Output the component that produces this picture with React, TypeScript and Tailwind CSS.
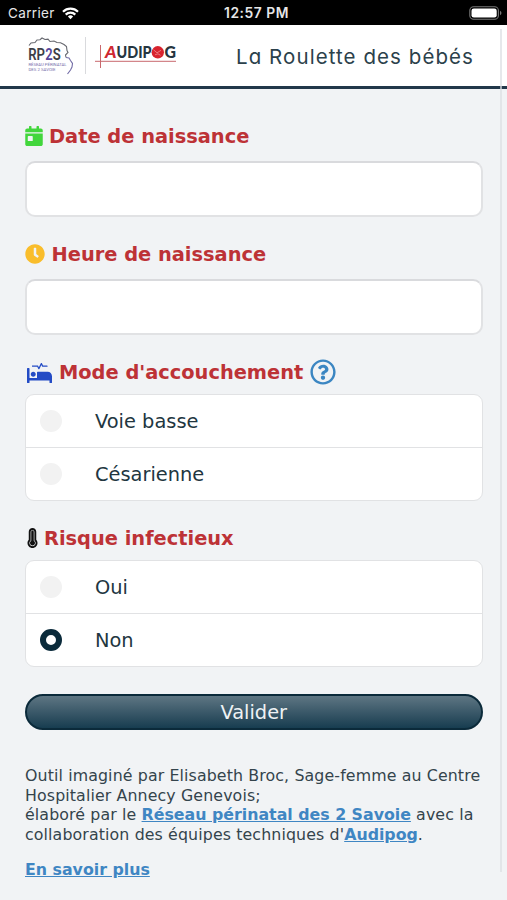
import type { ReactNode } from "react";
import {
  FaCalendarDay,
  FaClock,
  FaProcedures,
  FaRegQuestionCircle,
  FaThermometerFull,
} from "react-icons/fa";

function StatusBar() {
  return (
    <div className="grid h-[25px] grid-cols-3 items-center bg-black pl-2 pr-[5px] pt-px font-[Inter,sans-serif] text-[13.5px] text-[#e6e6e6]">
      <div className="flex items-center gap-[7px]">
        <span className="tracking-[0.35px]">Carrier</span>
        <svg width="17" height="13" viewBox="0 0 17 13" fill="none" stroke="#fff" strokeWidth="2.2">
          <path d="M1 4.800a10.600 10.600 0 0 1 15 0" />
          <path d="M3.700 7.600a6.800 6.800 0 0 1 9.600 0" />
          <path d="M8.500 12.200 5.900 9.500a3.700 3.700 0 0 1 5.200 0z" fill="#fff" stroke="none" />
        </svg>
      </div>
      <div className="whitespace-nowrap pl-[3px] text-center text-[13.8px] font-semibold tracking-[0.55px]">12:57 PM</div>
      <div className="flex justify-end">
        <svg width="33" height="14" viewBox="0 0 33 14">
          <rect x="0.8" y="0.8" width="28.6" height="12.4" rx="3.8" fill="none" stroke="#777" strokeWidth="1.1" />
          <rect x="2.5" y="2.4" width="25.2" height="9.2" rx="2.3" fill="#fff" />
          <path d="M31 4.7q1.5.8 1.5 2.3T31 9.3z" fill="#777" />
        </svg>
      </div>
    </div>
  );
}

function Rp2sLogo() {
  return (
    <svg width="47" height="40" viewBox="0 0 47 40">
      <g fill="none" strokeWidth="1.1">
        <path
          d="M1 9.500 3 7 7 6.500 9 4l3-.3L14 2l3 1.500 3-.3 2 2.300 4-.5 3 1.500 3.500.3L36 8.500l2.500 2 .5 4 1 2-2.500 2.500.5 2.500"
          stroke="#66686f"
        />
        <path d="m38 21.500 3 .5 1.500 2.500 2 3-.5 3.500-1.500 3-3 4" stroke="#716ba5" />
      </g>
      <g fontFamily="Roboto, sans-serif" fontWeight="600" fontSize="17" fill="#3c3e46">
        <text x="0.200" y="23.500" textLength="16.800" lengthAdjust="spacingAndGlyphs">RP</text>
        <text x="17.200" y="23.500" textLength="7.400" lengthAdjust="spacingAndGlyphs" fill="#55449b">2</text>
        <text x="24.800" y="23.500" textLength="8" lengthAdjust="spacingAndGlyphs">S</text>
      </g>
      <g fontFamily="Roboto, sans-serif" fontSize="3.700" fill="#7770ac">
        <text x="0.500" y="29.800" textLength="38" lengthAdjust="spacingAndGlyphs">RÉSEAU PÉRINATAL</text>
        <text x="0.500" y="34.800" textLength="27" lengthAdjust="spacingAndGlyphs">DES 2 SAVOIE</text>
      </g>
    </svg>
  );
}

function AudipogLogo() {
  return (
    <svg width="84" height="26" viewBox="0 0 84 26">
      <path d="M6.500 1v23M1 17.300h81" stroke="#c9686d" strokeWidth="1" />
      <g fontFamily="Lato, sans-serif" fontWeight="900" fontSize="16.500">
        <text x="11" y="14" fill="#cf2831" fontStyle="italic" textLength="11.500" lengthAdjust="spacingAndGlyphs">A</text>
        <text x="22.500" y="14" fill="#263640" textLength="35" lengthAdjust="spacingAndGlyphs">UDIP</text>
        <text x="70.500" y="14" fill="#263640" textLength="11.500" lengthAdjust="spacingAndGlyphs">G</text>
      </g>
      <circle cx="63.800" cy="8.300" r="6.200" fill="#d8232e" />
      <path d="m59.500 5.800 3.500 3 4-2.500M61 10.800l3-1 2.500 1.500" stroke="#f08c91" strokeWidth=".8" fill="none" />
    </svg>
  );
}

function Heading({ children, className }: { children: ReactNode; className: string }) {
  return (
    <h2 className={`flex h-[30px] items-center whitespace-nowrap text-[19.4px] font-bold text-[#bd3236] ${className}`}>
      {children}
    </h2>
  );
}

function Field({ label }: { label: string }) {
  return (
    <input
      aria-label={label}
      className="block h-[56px] w-full rounded-[10px] border-2 border-[#e1e2e4] border-t-[#d9dadd] bg-white px-4 outline-none"
    />
  );
}

function Choices({ options, selected }: { options: string[]; selected?: string }) {
  return (
    <div className="h-[107px] divide-y-[1.5px] divide-[#e1e2e4] overflow-hidden rounded-[9px] border-[1.5px] border-[#e1e2e4] bg-white">
      {options.map((option) => (
        <div key={option} className="flex h-[53px] items-center pl-[14px] text-[19.4px] text-[#22363f]">
          {option === selected ? (
            <span className="-mt-[2px] size-[22px] rounded-full border-[6.5px] border-[#0b2b3b] bg-white" />
          ) : (
            <span className="-mt-px size-[22px] rounded-full bg-[#f2f2f2]" />
          )}
          <span className="ml-[33px] pt-px">{option}</span>
        </div>
      ))}
    </div>
  );
}

export default function App() {
  return (
    <div className="relative h-[900px] w-[507px] overflow-hidden bg-[#f1f3f5] font-['DejaVu_Sans',sans-serif]">
      <StatusBar />
      <header className="flex h-[64px] items-center border-b-[3px] border-[#22384a] bg-white pl-[28px]">
        <Rp2sLogo />
        <div className="ml-[10px] h-[37px] w-px bg-[#d9dadd]" />
        <div className="ml-[8px] mt-[2px]">
          <AudipogLogo />
        </div>
        <h1 className="ml-[58px] mt-[3px] whitespace-nowrap font-[Inter,sans-serif] text-[20.5px] tracking-[1.07px] text-[#2b414b] [font-feature-settings:'cv11']">
          La Roulette des bébés
        </h1>
      </header>

      <main className="pl-[25px] pr-[24.5px] pt-[32px]">
        <Heading className="gap-[6px]">
          <FaCalendarDay className="h-[20px] w-[18px] text-[#42d63c]" />
          <span className="pt-[2px]">Date de naissance</span>
        </Heading>
        <div className="pt-[10px]">
          <Field label="Date de naissance" />
        </div>

        <Heading className="mt-[22px] gap-[6.5px]">
          <FaClock className="size-[20px] text-[#f9bd2b]" />
          <span className="pt-[2px]">Heure de naissance</span>
        </Heading>
        <div className="pt-[10px]">
          <Field label="Heure de naissance" />
        </div>

        <Heading className="mt-[22px] gap-[7px] pl-[2px]">
          <FaProcedures className="mt-[2px] h-[20px] w-[25px] text-[#234bc5]" />
          <span className="pt-[2px]">Mode d'accouchement</span>
          <FaRegQuestionCircle className="size-[26px] text-[#3b86c2]" />
        </Heading>
        <div className="pt-[7px]">
          <Choices options={["Voie basse", "Césarienne"]} />
        </div>

        <Heading className="mt-[22px] gap-[6px] pl-[2px]">
          <FaThermometerFull className="h-[20px] w-[11px] text-[#111]" />
          <span className="pt-[2px]">Risque infectieux</span>
        </Heading>
        <div className="pt-[7px]">
          <Choices options={["Oui", "Non"]} selected="Non" />
        </div>

        <button className="mt-[27px] block h-[36px] w-full rounded-full border-2 border-[#0b2a3a] bg-linear-to-b from-[#5e7683] to-[#173d50] pt-px text-[19.4px] leading-[32px] text-[#eef2f4]">
          Valider
        </button>

        <p className="mt-[36px] whitespace-nowrap text-[15.8px] leading-[19.6px] tracking-[0.12px] text-[#34444c]">
          Outil imaginé par Elisabeth Broc, Sage-femme au Centre
          <br />
          Hospitalier Annecy Genevois;
          <br />
          élaboré par le{" "}
          <a className="font-bold tracking-normal text-[#3f86c3] underline">Réseau périnatal des 2 Savoie</a> avec la
          <br />
          collaboration des équipes techniques d'
          <a className="font-bold tracking-normal text-[#3f86c3] underline">Audipog</a>.
        </p>
        <p className="mt-[16px] text-[15.8px] leading-[19.6px]">
          <a className="font-bold text-[#3f86c3] underline">En savoir plus</a>
        </p>
      </main>

      {/* Scroll track overlaying the page edge */}
      <div className="absolute right-[5px] top-[29px] h-[843px] w-[2px] bg-[#dcdee2]/70" />
    </div>
  );
}
